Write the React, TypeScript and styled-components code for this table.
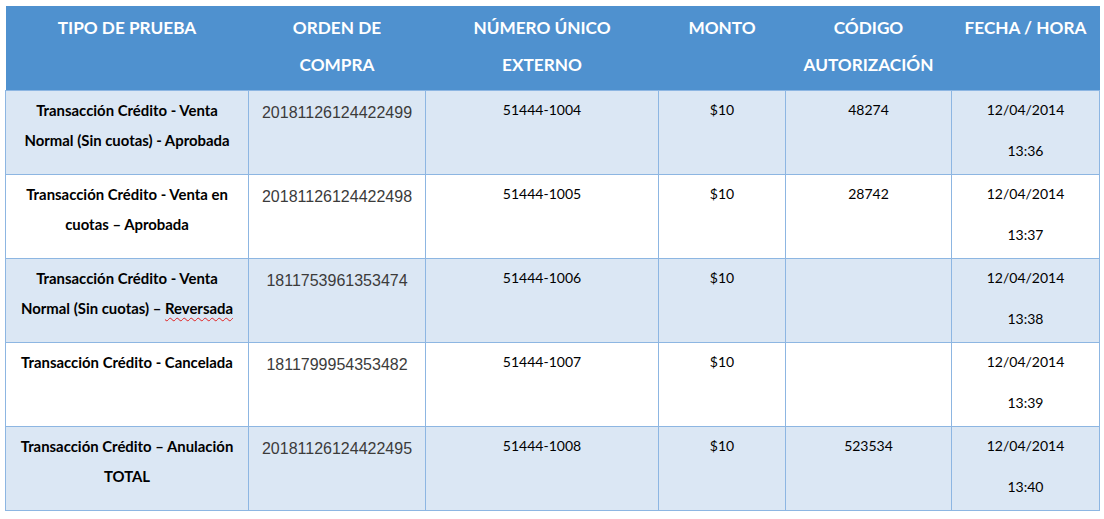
import styled, { createGlobalStyle } from "styled-components";

const GlobalStyle = createGlobalStyle`
  body {
    margin: 0;
    background: #ffffff;
    font-family: Lato, "Liberation Sans", sans-serif;
  }
`;

const Page = styled.div`
  padding: 6px 0 0 5px;
`;

const Table = styled.table`
  border-collapse: collapse;
  table-layout: fixed;
  width: 1094px;
`;

const HeadCell = styled.th`
  background: #4f91cf;
  color: #ffffff;
  font-family: Lato, sans-serif;
  font-weight: 700;
  font-size: 17.2px;
  line-height: 37px;
  text-align: center;
  vertical-align: top;
  padding: 3px 6px 0;
  height: 81px;
  border-bottom: 1px solid #8db6e2;
`;

const Row = styled.tr<{ $shade: boolean }>`
  background: ${(p) => (p.$shade ? "#dbe7f4" : "#ffffff")};
`;

const Cell = styled.td<{ $bold?: boolean }>`
  border: 1px solid #8db6e2;
  height: 79px;
  padding: 4px 6px 0;
  vertical-align: top;
  text-align: center;
  font-family: Lato, sans-serif;
  font-size: ${(p) => (p.$bold ? "14.9px" : "14px")};
  font-weight: ${(p) => (p.$bold ? 700 : 400)};
  line-height: 30px;
  color: #000000;
`;

const OrderNumber = styled.span`
  display: block;
  font-family: "Liberation Sans", Arial, sans-serif;
  font-size: 16px;
  color: #3b3b3b;
  margin-top: 3px;
`;

const DateLine = styled.span`
  display: block;
  & + & {
    margin-top: 11px;
  }
`;

const Misspelled = styled.span`
  text-decoration: underline wavy #e02020;
  text-decoration-thickness: 1px;
  text-underline-offset: 3px;
`;

const columns = [
  { title: "TIPO DE PRUEBA", width: 243 },
  { title: "ORDEN DE COMPRA", width: 177 },
  { title: "NÚMERO ÚNICO EXTERNO", width: 233 },
  { title: "MONTO", width: 127 },
  { title: "CÓDIGO AUTORIZACIÓN", width: 166 },
  { title: "FECHA / HORA", width: 148 },
];

type Entry = {
  tipo: React.ReactNode;
  orden: string;
  externo: string;
  monto: string;
  codigo: string;
  hora: string;
};

const rows: Entry[] = [
  {
    tipo: "Transacción Crédito - Venta Normal (Sin cuotas) - Aprobada",
    orden: "20181126124422499",
    externo: "51444-1004",
    monto: "$10",
    codigo: "48274",
    hora: "13:36",
  },
  {
    tipo: "Transacción Crédito - Venta en cuotas – Aprobada",
    orden: "20181126124422498",
    externo: "51444-1005",
    monto: "$10",
    codigo: "28742",
    hora: "13:37",
  },
  {
    tipo: (
      <>
        Transacción Crédito - Venta Normal (Sin cuotas) – <Misspelled>Reversada</Misspelled>
      </>
    ),
    orden: "1811753961353474",
    externo: "51444-1006",
    monto: "$10",
    codigo: "",
    hora: "13:38",
  },
  {
    tipo: "Transacción Crédito - Cancelada",
    orden: "1811799954353482",
    externo: "51444-1007",
    monto: "$10",
    codigo: "",
    hora: "13:39",
  },
  {
    tipo: "Transacción Crédito – Anulación TOTAL",
    orden: "20181126124422495",
    externo: "51444-1008",
    monto: "$10",
    codigo: "523534",
    hora: "13:40",
  },
];

export default function App() {
  return (
    <Page>
      <GlobalStyle />
      <Table>
        <colgroup>
          {columns.map((c) => (
            <col key={c.title} style={{ width: c.width }} />
          ))}
        </colgroup>
        <thead>
          <tr>
            {columns.map((c) => (
              <HeadCell key={c.title}>{c.title}</HeadCell>
            ))}
          </tr>
        </thead>
        <tbody>
          {rows.map((r, idx) => (
            <Row key={r.externo} $shade={idx % 2 === 0}>
              <Cell $bold>{r.tipo}</Cell>
              <Cell>
                <OrderNumber>{r.orden}</OrderNumber>
              </Cell>
              <Cell>{r.externo}</Cell>
              <Cell>{r.monto}</Cell>
              <Cell>{r.codigo}</Cell>
              <Cell>
                <DateLine>12/04/2014</DateLine>
                <DateLine>{r.hora}</DateLine>
              </Cell>
            </Row>
          ))}
        </tbody>
      </Table>
    </Page>
  );
}
